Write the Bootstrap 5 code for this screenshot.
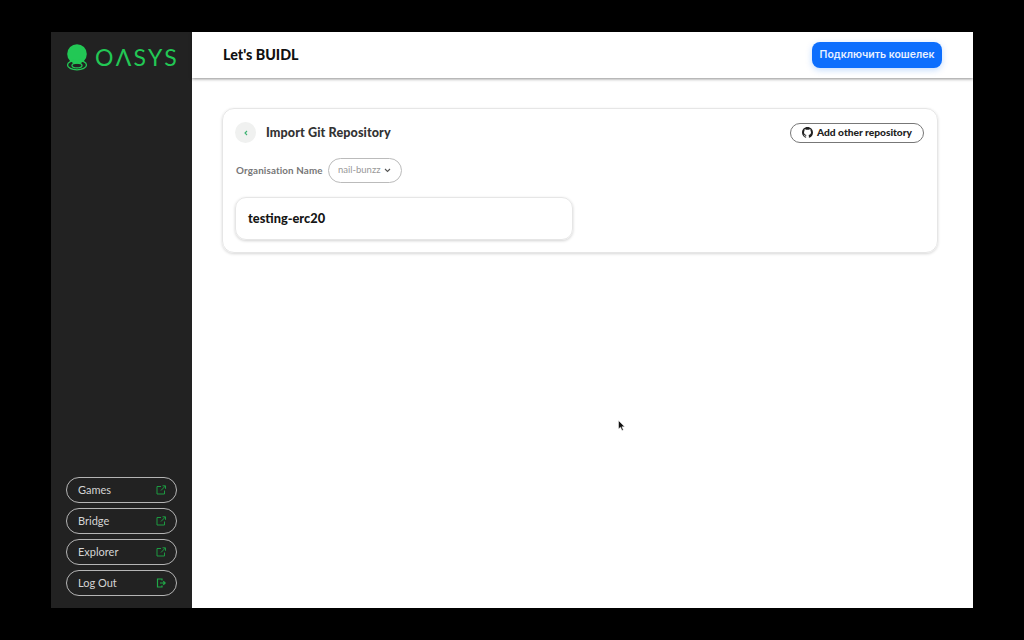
<!DOCTYPE html>
<html lang="en">
<head>
  <meta charset="UTF-8">
  <title>Oasys BUIDL</title>
  <link href="https://cdn.jsdelivr.net/npm/bootstrap@5.3.3/dist/css/bootstrap.min.css" rel="stylesheet">
  <style>
    html, body { height: 100%; }
    body {
      background: #000;
      padding: 32px 51px;
      font-family: Lato, "Liberation Sans", sans-serif;
      overflow: hidden;
    }
    .app-frame { width: 922px; height: 576px; background: #fff; }
    .side-bar { width: 141px; background: #222; padding: 12px 15px 12px 15px; }
    .logo-row { height: 27px; gap: 7px; margin-right: -12px; }
    .logo-text { color: #22c855; font-size: 23px; font-weight: 400; letter-spacing: 2.3px; line-height: 1; }
    .side-link {
      height: 26px; border: 1px solid #b5b5b5; border-radius: 13px;
      color: #d4d4d4; font-size: 11px; padding: 0 10px 0 11px; text-decoration: none;
    }
    .side-stack { gap: 5px; margin-bottom: 0; }
    .top-head {
      height: 46px; padding: 0 31px 0 31px;
      box-shadow: 0 1px 3px rgba(0,0,0,.45);
    }
    .head-title { font-size: 14.3px; font-weight: 900; color: #111; margin: 0; }
    .wallet-btn {
      background: #0d6efd; color: #e8f0ff; border: 0; border-radius: 8px;
      font-family: Inter, "Liberation Sans", sans-serif; font-size: 10.5px; font-weight: 600;
      height: 26px; width: 130px; padding: 0;
      box-shadow: 0 2px 6px rgba(13,110,253,.25);
    }
    .main-area { padding: 30px 35px 0 30px; }
    .repo-panel {
      height: 145px; border: 1px solid #e6e6e6; border-radius: 12px;
      box-shadow: 0 1px 3px rgba(0,0,0,.16); padding: 13px 13px 12px 12px;
    }
    .back-dot { width: 21px; height: 21px; border-radius: 50%; background: #f0f1f0; }
    .panel-title { font-size: 12.6px; font-weight: 900; color: #333; margin: 0 0 0 10px; letter-spacing: .1px; }
    .other-btn {
      height: 20px; width: 134px; border: 1px solid #777; border-radius: 10px;
      font-size: 10.2px; font-weight: 900; color: #222; gap: 4px; background: #fff; padding: 0;
    }
    .org-row { margin-top: 15px; gap: 5px; margin-left: 1px; }
    .org-label { font-size: 9.8px; font-weight: 700; color: #777; letter-spacing: .14px; }
    .org-select {
      height: 25px; width: 74px; border: 1px solid #bbb; border-radius: 12.5px;
      font-size: 9.5px; color: #999; gap: 4px;
    }
    .repo-row {
      width: 338px; height: 43px; margin-top: 14px; border: 1px solid #e6e6e6; border-radius: 11px;
      box-shadow: 0 1px 3px rgba(0,0,0,.18); padding-left: 12px;
      font-size: 12.8px; font-weight: 900; color: #151515;
    }
    .mouse-ptr { position: absolute; left: 618px; top: 420px; }
  </style>
</head>
<body>
  <div class="app-frame d-flex">
    <aside class="side-bar d-flex flex-column justify-content-between">
      <div class="logo-row d-flex align-items-center">
        <svg class="flex-shrink-0" width="22" height="27" viewBox="0 0 22 27">
          <circle cx="11" cy="10" r="9.800" fill="#22c855"/>
          <ellipse cx="11" cy="21" rx="9.500" ry="4.800" fill="none" stroke="#22c855" stroke-width="1.300"/>
          <ellipse cx="11" cy="21.500" rx="5" ry="2.400" fill="none" stroke="#22c855" stroke-width="1.300"/>
        </svg>
        <span class="logo-text">OΛSYS</span>
      </div>
      <nav class="side-stack d-flex flex-column">
        <a class="side-link d-flex align-items-center justify-content-between" href="#">Games
          <svg width="10" height="10" viewBox="0 0 10 10" fill="none" stroke="#1c9a41" stroke-width="1"><path d="M5 1.500H1v7.500h7.500V5.500M5 5.500 9.300 1M6.500 .8h3v3"/></svg></a>
        <a class="side-link d-flex align-items-center justify-content-between" href="#">Bridge
          <svg width="10" height="10" viewBox="0 0 10 10" fill="none" stroke="#1c9a41" stroke-width="1"><path d="M5 1.500H1v7.500h7.500V5.500M5 5.500 9.300 1M6.500 .8h3v3"/></svg></a>
        <a class="side-link d-flex align-items-center justify-content-between" href="#">Explorer
          <svg width="10" height="10" viewBox="0 0 10 10" fill="none" stroke="#1c9a41" stroke-width="1"><path d="M5 1.500H1v7.500h7.500V5.500M5 5.500 9.300 1M6.500 .8h3v3"/></svg></a>
        <a class="side-link d-flex align-items-center justify-content-between" href="#">Log Out
          <svg width="10" height="10" viewBox="0 0 10 10" fill="none" stroke="#1fa847" stroke-width="1.200"><path d="M6 2.500V1H1.500v8H6V7.500M4 5h5M7.300 3.200 9.200 5 7.300 6.800"/></svg></a>
      </nav>
    </aside>
    <div class="flex-grow-1 d-flex flex-column">
      <header class="top-head d-flex align-items-center justify-content-between">
        <h1 class="head-title">Let's BUIDL</h1>
        <button class="wallet-btn" type="button">Подключить кошелек</button>
      </header>
      <main class="main-area">
        <section class="repo-panel">
          <div class="d-flex align-items-center justify-content-between">
            <div class="d-flex align-items-center">
              <span class="back-dot d-flex align-items-center justify-content-center">
                <svg width="6" height="6" viewBox="0 0 6 6" fill="none" stroke="#3cb371" stroke-width="1.100"><path d="M4 1 2 3l2 2"/></svg>
              </span>
              <h2 class="panel-title">Import Git Repository</h2>
            </div>
            <button class="other-btn d-flex align-items-center justify-content-center" type="button">
              <svg width="11" height="11" viewBox="0 0 16 16" fill="#222"><path d="M8 0C3.580 0 0 3.580 0 8c0 3.540 2.290 6.530 5.470 7.590.4.070.55-.170.55-.380 0-.190-.010-.820-.010-1.490-2.010.370-2.530-.490-2.690-.940-.090-.230-.480-.940-.820-1.130-.280-.150-.680-.520-.010-.530.630-.010 1.080.580 1.230.820.720 1.210 1.870.870 2.330.660.070-.520.280-.870.510-1.070-1.780-.200-3.640-.890-3.640-3.950 0-.870.310-1.590.820-2.150-.080-.200-.360-1.020.080-2.120 0 0 .670-.210 2.200.820.640-.180 1.320-.270 2-.270s1.360.090 2 .270c1.530-1.040 2.200-.820 2.200-.820.440 1.100.160 1.920.080 2.120.510.560.820 1.270.820 2.150 0 3.070-1.870 3.750-3.650 3.950.290.250.540.730.540 1.480 0 1.070-.010 1.930-.010 2.200 0 .210.150.460.550.380A8.010 8.010 0 0 0 16 8c0-4.420-3.580-8-8-8z"/></svg>
              Add other repository
            </button>
          </div>
          <div class="org-row d-flex align-items-center">
            <span class="org-label">Organisation Name</span>
            <span class="org-select d-flex align-items-center justify-content-center">nail-bunzz
              <svg width="7" height="5" viewBox="0 0 7 5" fill="none" stroke="#555" stroke-width="1.100"><path d="m1 1 2.500 2.500L6 1"/></svg>
            </span>
          </div>
          <div class="repo-row d-flex align-items-center">testing-erc20</div>
        </section>
      </main>
    </div>
  </div>
  <svg class="mouse-ptr" width="8" height="12" viewBox="0 0 8 12"><path d="M.5.5v8.500l2-1.800 1.500 3.300 1.400-.6-1.500-3.100h2.800z" fill="#111" stroke="#fff" stroke-width=".5"/></svg>
</body>
</html>
